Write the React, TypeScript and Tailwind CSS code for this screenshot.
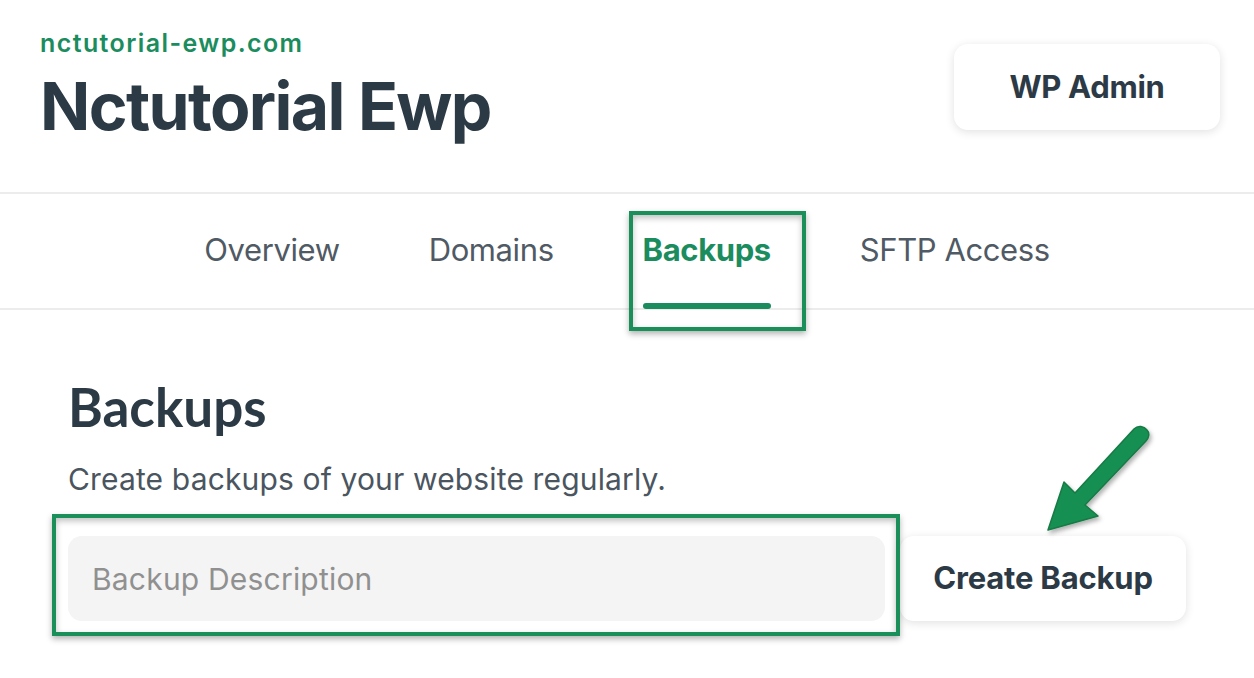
import { useState } from 'react';

const TABS = ['Overview', 'Domains', 'Backups', 'SFTP Access'] as const;

type Tab = typeof TABS[number];

export default function App() {
  const [tab, setTab] = useState<Tab>('Backups');
  const [desc, setDesc] = useState('');

  return (
    <div className="relative w-[1254px] h-[678px] bg-white overflow-hidden text-[#2c3a46] font-['Inter',sans-serif]">
      {/* ── Header ── */}
      <header className="flex justify-between items-start h-[194px] pl-[40px] pr-[34px] pt-[28px] border-b-2 border-[#ececec]">
        <div>
          <p className="text-[25px] leading-[30px] font-semibold text-[#1b8c5e] tracking-[1.4px]">nctutorial-ewp.com</p>
          <h1 className="mt-[8px] text-[66px] leading-[80px] font-bold tracking-[-1.6px]">Nctutorial Ewp</h1>
        </div>
        <button className="mt-[16px] w-[266px] h-[86px] rounded-[14px] bg-white shadow-[0_2px_10px_rgba(0,0,0,0.12)] text-[31px] font-bold tracking-[-0.3px]">
          WP Admin
        </button>
      </header>

      {/* ── Tabs ── */}
      <nav className="flex justify-center gap-[89px] h-[116px] border-b-2 border-[#ececec]">
        {TABS.map(t => (
          <button
            key={t}
            onClick={() => setTab(t)}
            className={`relative h-full flex items-center text-[31px] pb-[2px] tracking-[-0.4px] ${
              tab === t ? 'font-bold text-[#1b8c5e]' : 'text-[#505a64]'
            }`}
          >
            {t}
            {tab === t && <span className="absolute left-0 right-0 bottom-[-1px] h-[6px] rounded-full bg-[#1b8c5e]" />}
          </button>
        ))}
      </nav>

      {/* ── Content ── */}
      <section className="px-[68px] pt-[67px]">
        <h2 className="text-[53px] leading-[60px] font-bold font-['Lato',sans-serif]">Backups</h2>
        <p className="mt-[24px] text-[30px] leading-[36px] text-[#4a5560] tracking-[0.15px]">Create backups of your website regularly.</p>
        <div className="mt-[39px] flex gap-[15px] items-center">
          <input
            value={desc}
            onChange={e => setDesc(e.target.value)}
            placeholder="Backup Description"
            className="w-[820px] h-[85px] rounded-[14px] bg-[#f4f4f4] px-[24px] text-[30px] tracking-[0.2px] placeholder:text-[#909090] outline-none"
          />
          <button className="w-[287px] h-[85px] rounded-[14px] bg-white shadow-[0_2px_10px_rgba(0,0,0,0.12)] text-[31px] font-bold tracking-[-0.2px]">
            Create Backup
          </button>
        </div>
      </section>

      {/* ── Annotation overlays ── */}
      <div className="absolute left-[629px] top-[211px] w-[177px] h-[120px] border-[4px] border-[#1a8f5a] shadow-[0_3px_6px_rgba(0,0,0,0.3),inset_0_3px_6px_rgba(0,0,0,0.25)] pointer-events-none" />
      <div className="absolute left-[52px] top-[514px] w-[848px] h-[122px] border-[4px] border-[#1a8f5a] shadow-[0_3px_6px_rgba(0,0,0,0.3),inset_0_3px_6px_rgba(0,0,0,0.25)] pointer-events-none" />
      <svg className="absolute left-[1030px] top-[420px] pointer-events-none" width="130" height="125" viewBox="0 0 130 125">
        <defs>
          <filter id="sh" x="-20%" y="-20%" width="140%" height="140%">
            <feDropShadow dx="2" dy="3" stdDeviation="2" floodColor="#000" floodOpacity="0.3" />
          </filter>
        </defs>
        <path
          d="M104 9 C108 5 114 6 117 10 C120 13 119 18 116 21 L55 85 L68 96 L18 110 L34 62 L45 73 Z"
          fill="#178f53"
          stroke="#147a45"
          strokeWidth="1.5"
          strokeLinejoin="round"
          filter="url(#sh)"
        />
      </svg>
    </div>
  );
}
